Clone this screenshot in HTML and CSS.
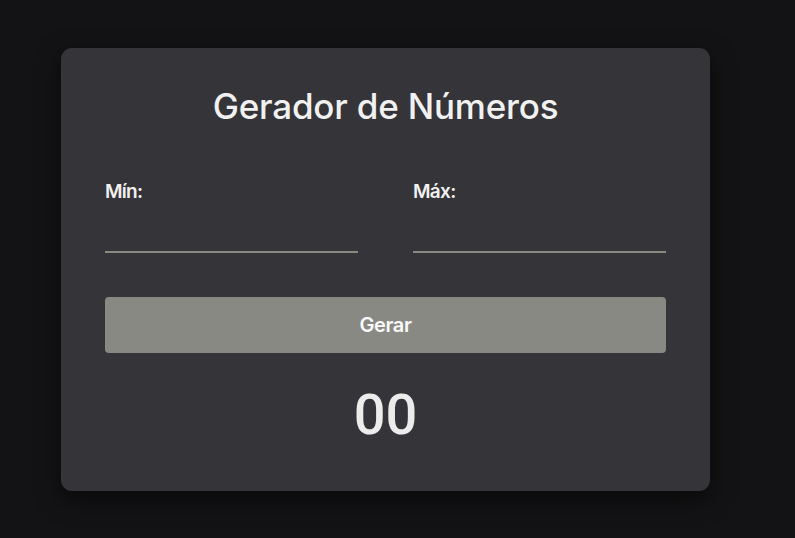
FILE: index.html
```html
<!DOCTYPE html>
<html lang="pt-BR">
<head>
<meta charset="utf-8">
<title>Gerador de Números</title>
<link rel="stylesheet" href="styles.css">
</head>
<body>
<main class="card">
  <h1 class="title">Gerador de Números</h1>
  <div class="fields">
    <div class="field">
      <label class="label" for="min">Mín:</label>
      <input class="input" id="min" type="number">
    </div>
    <div class="field">
      <label class="label" for="max">Máx:</label>
      <input class="input" id="max" type="number">
    </div>
  </div>
  <button class="btn" type="button">Gerar</button>
  <div class="result">00</div>
</main>
</body>
</html>
```
FILE: styles.css
```css
* { box-sizing: border-box; }
html, body { margin: 0; padding: 0; }
body {
  background: #131315;
  width: 795px;
  height: 538px;
  overflow: hidden;
  font-family: Inter, "Open Sans", sans-serif;
  color: #f1f1f1;
}
.card {
  margin: 48px 0 0 61px;
  width: 649px;
  height: 443px;
  background: #353439;
  border-radius: 11px;
  box-shadow: 0 8px 24px rgba(0,0,0,0.55);
  padding: 34px 44px 0;
  display: flex;
  flex-direction: column;
}
.title {
  margin: 0;
  text-align: center;
  font-size: 35px;
  line-height: 48px;
  font-weight: 500;
  letter-spacing: -0.2px;
  color: #f1f1f1;
}
.fields {
  display: grid;
  grid-template-columns: 253px 253px;
  column-gap: 55px;
  margin-top: 50px;
}
.field {
  display: flex;
  flex-direction: column;
}
.label {
  font-size: 19px;
  line-height: 24px;
  font-weight: 600;
  letter-spacing: -0.7px;
  color: #f1f1f1;
}
.input {
  margin-top: 19px;
  height: 30px;
  background: transparent;
  border: none;
  border-bottom: 2px solid #8a8a85;
  outline: none;
  color: #f1f1f1;
  font: inherit;
  padding: 0;
}
.btn {
  margin-top: 44px;
  height: 56px;
  width: 100%;
  border: none;
  border-radius: 4px;
  background: #898984;
  color: #fafafa;
  font-family: Inter, "Open Sans", sans-serif;
  font-size: 20px;
  font-weight: 600;
  letter-spacing: -0.4px;
}
.result {
  margin-top: 30px;
  text-align: center;
  font-family: Roboto, "Liberation Sans", sans-serif;
  font-size: 56px;
  line-height: 64px;
  font-weight: 500;
  color: #ececec;
}
```
